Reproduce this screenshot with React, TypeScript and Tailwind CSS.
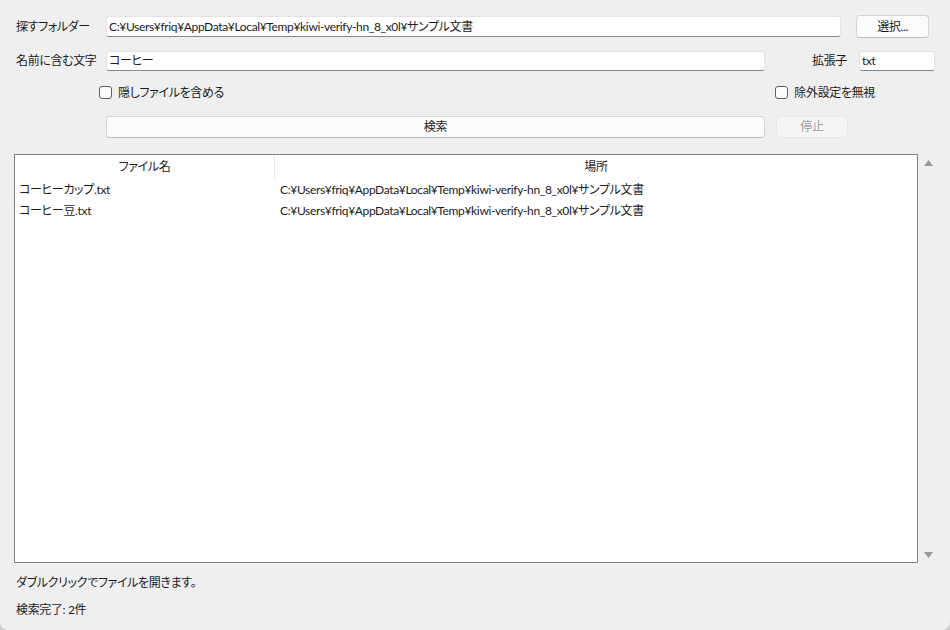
//! File finder window: search folder / name filter form, result list with
//! name + location columns, and the status lines underneath.

import type { ReactNode } from "react";

const FOLDER = "C:¥Users¥friq¥AppData¥Local¥Temp¥kiwi-verify-hn_8_x0l¥サンプル文書";

const results = [
  { name: "コーヒーカップ.txt", place: FOLDER },
  { name: "コーヒー豆.txt", place: FOLDER },
];

function TextBox({ value, className }: { value: string; className: string }) {
  return (
    <div
      className={
        "flex items-center rounded-[3px] border border-[#e3e3e3] border-b-[#868686] bg-white px-[2px] text-[#1b1b1b] " +
        className
      }
    >
      <span className="truncate leading-[16px]">{value}</span>
    </div>
  );
}

function Check({ label, className }: { label: string; className?: string }) {
  return (
    <label className={"flex items-center gap-[6px] " + (className ?? "")}>
      <span className="h-[13px] w-[13px] rounded-[3px] border border-[#5f5f5f] bg-[#fbfbfb]" />
      <span>{label}</span>
    </label>
  );
}

function Button({ children, disabled, className }: { children: ReactNode; disabled?: boolean; className: string }) {
  return (
    <button
      type="button"
      disabled={disabled}
      className={
        "flex items-center justify-center rounded-[4px] border " +
        (disabled
          ? "border-[#e8e8e8] bg-[#f5f5f5] text-[#9d9d9d] "
          : "border-[#d5d5d5] border-b-[#bdbdbd] bg-[#fbfbfb] text-[#1b1b1b] ") +
        className
      }
    >
      {children}
    </button>
  );
}

export default function App() {
  return (
    <div className="h-[630px] w-[950px] bg-[#cdcdcd]">
      <div className="flex h-full w-full flex-col rounded-b-[8px] bg-[#efefef] text-[12px] leading-[16px] tracking-[-0.35px] text-[#1b1b1b] [font-family:Lato,'Noto_Sans_CJK_JP',sans-serif] [font-feature-settings:'palt']">
        <div className="mt-[15px] flex h-[23px] items-center">
          <span className="w-[106px] pl-4">探すフォルダー</span>
          <TextBox value={FOLDER} className="h-[21px] w-[735px]" />
          <Button className="ml-[15px] h-[23px] w-[73px]">選択...</Button>
        </div>

        <div className="mt-[12px] flex h-[21px] items-center">
          <span className="w-[106px] pl-4">名前に含む文字</span>
          <TextBox value="コーヒー" className="h-[20px] w-[659px]" />
          <span className="ml-[47px] w-[47px]">拡張子</span>
          <TextBox value="txt" className="h-[20px] w-[76px]" />
        </div>

        <div className="mt-[15px] flex h-[13px] items-center">
          <Check label="隠しファイルを含める" className="ml-[99px]" />
          <Check label="除外設定を無視" className="ml-auto mr-[75px]" />
        </div>

        <div className="mt-[17px] flex h-[22px] items-center">
          <Button className="ml-[106px] h-[22px] w-[659px]">検索</Button>
          <Button disabled className="ml-[11px] h-[22px] w-[72px]">停止</Button>
        </div>

        <div className="ml-[14px] mt-[16px] flex h-[409px]">
          <div className="w-[904px] border border-[#80838a] bg-white">
            <div className="flex h-[24px]">
              <div className="flex w-[260px] items-center justify-center border-r border-[#e5e5e5]">ファイル名</div>
              <div className="flex flex-1 items-center justify-center">場所</div>
            </div>
            {results.map((r) => (
              <div key={r.name} className="flex h-[21px] items-center">
                <span className="w-[265px] pl-[4px]">{r.name}</span>
                <span>{r.place}</span>
              </div>
            ))}
          </div>
          <div className="ml-[6px] flex w-[8px] flex-col justify-between py-[6px] pb-[5px] text-[#9a9a9a]">
            <svg width="9" height="6" viewBox="0 0 9 6">
              <path d="M4.5 0 9 6H0z" fill="currentColor" />
            </svg>
            <svg width="9" height="6" viewBox="0 0 9 6">
              <path d="M0 0h9L4.5 6z" fill="currentColor" />
            </svg>
          </div>
        </div>

        <div className="ml-4 mt-[12px]">ダブルクリックでファイルを開きます。</div>
        <div className="ml-4 mt-[11px]">検索完了: 2件</div>
      </div>
    </div>
  );
}
